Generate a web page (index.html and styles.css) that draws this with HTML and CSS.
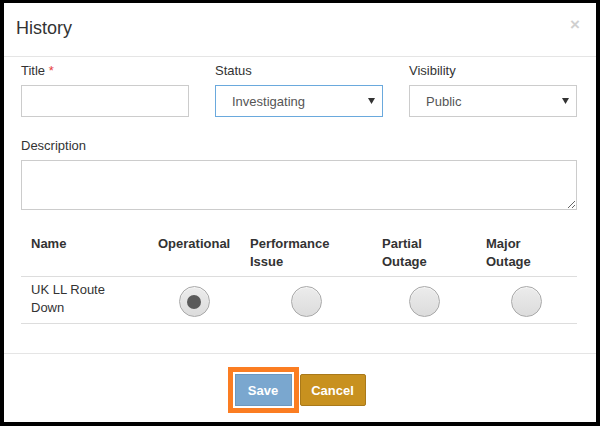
FILE: index.html
```html
<!DOCTYPE html>
<html>
<head>
<meta charset="utf-8">
<link rel="stylesheet" href="styles.css">
</head>
<body>
<div class="modal">
  <div class="modal-header">
    <h4 class="modal-title">History</h4>
    <span class="close">×</span>
  </div>
  <div class="modal-body">
    <div class="row3">
      <div class="field">
        <label class="lbl">Title <span class="req">*</span></label>
        <input class="ctrl" type="text">
      </div>
      <div class="field">
        <label class="lbl">Status</label>
        <div class="ctrl select focus"><span>Investigating</span><svg class="caret" width="7" height="6" viewBox="0 0 7 6"><path d="M0 0H7L3.5 6Z" fill="#333"/></svg></div>
      </div>
      <div class="field">
        <label class="lbl">Visibility</label>
        <div class="ctrl select"><span>Public</span><svg class="caret" width="7" height="6" viewBox="0 0 7 6"><path d="M0 0H7L3.5 6Z" fill="#333"/></svg></div>
      </div>
    </div>
    <div class="field desc">
      <label class="lbl">Description</label>
      <textarea class="ctrl area"></textarea>
    </div>
    <div class="table">
      <div class="th">Name</div>
      <div class="th">Operational</div>
      <div class="th">Performance Issue</div>
      <div class="th">Partial Outage</div>
      <div class="th">Major Outage</div>
      <div class="td name">UK LL Route Down</div>
      <div class="td radio-cell"><span class="radio checked"></span></div>
      <div class="td radio-cell"><span class="radio"></span></div>
      <div class="td radio-cell"><span class="radio"></span></div>
      <div class="td radio-cell"><span class="radio"></span></div>
    </div>
  </div>
  <div class="modal-footer">
    <button class="btn btn-save">Save</button>
    <button class="btn btn-cancel">Cancel</button>
  </div>
</div>
</body>
</html>
```
FILE: styles.css
```css
html, body {
  margin: 0;
  padding: 0;
  background: #000;
  height: 426px;
  overflow: hidden;
}
body {
  font-family: "Liberation Sans", Arial, sans-serif;
  font-size: 13px;
  color: #333;
}
.modal {
  margin: 3px 4px 0 4px;
  height: 419px;
  background: #fff;
  display: flex;
  flex-direction: column;
}
.modal-header {
  display: flex;
  justify-content: space-between;
  align-items: flex-start;
  padding: 15px 16px 18px 12px;
  border-bottom: 1px solid #e5e5e5;
}
.modal-title {
  margin: 0;
  font-size: 18px;
  font-weight: normal;
  line-height: 20px;
  color: #333;
}
.close {
  font-size: 17px;
  font-weight: bold;
  line-height: 14px;
  color: #d0d0d0;
  margin-top: 0;
}
.modal-body {
  padding: 5px 19px 0 17px;
  flex: 1;
  display: flex;
  flex-direction: column;
}
.row3 {
  display: grid;
  grid-template-columns: 168px 168px 168px;
  column-gap: 26px;
}
.field {
  display: flex;
  flex-direction: column;
}
.lbl {
  line-height: 18px;
  margin-bottom: 5px;
  color: #333;
}
.req {
  color: #e63c3c;
}
.ctrl {
  box-sizing: border-box;
  height: 32px;
  border: 1px solid #ccc;
  margin: 0;
  padding: 0 16px;
  font-family: inherit;
  font-size: 13px;
  color: #555;
  background: #fff;
  outline: none;
}
.select {
  display: flex;
  align-items: center;
  justify-content: space-between;
  padding: 0 7px 0 16px;
}
.select.focus {
  border-color: #6aa9dd;
}
.caret {
  display: block;
}
.desc {
  margin-top: 20px;
}
.area {
  height: 50px;
  width: 556px;
  resize: vertical;
  padding: 6px 12px;
}
.table {
  margin-top: 21px;
  display: grid;
  grid-template-columns: 127px 92px 132px 104px 101px;
}
.th {
  font-weight: bold;
  line-height: 18px;
  padding: 4px 10px 5px 10px;
  border-bottom: 1px solid #ddd;
}
.td {
  line-height: 18px;
  padding: 4px 10px 6px 10px;
  border-bottom: 1px solid #ddd;
}
.radio-cell {
  display: flex;
  justify-content: center;
  align-items: flex-start;
}
.radio {
  box-sizing: border-box;
  width: 31px;
  height: 31px;
  margin-top: 5px;
  border-radius: 50%;
  border: 1px solid #a9a9a9;
  background: linear-gradient(#ececec, #dcdcdc);
  box-shadow: inset 0 1px 1px rgba(255,255,255,0.6);
  display: flex;
  align-items: center;
  justify-content: center;
}
.radio.checked::after {
  content: "";
  width: 14px;
  height: 14px;
  border-radius: 50%;
  background: #5a5a5a;
}
.modal-footer {
  border-top: 1px solid #e5e5e5;
  display: flex;
  justify-content: center;
  align-items: flex-start;
  gap: 8px;
  padding: 20px 0 0 0;
  height: 69px;
  box-sizing: border-box;
}
.btn {
  font-family: "Liberation Sans", Arial, sans-serif;
  font-size: 13px;
  font-weight: bold;
  color: #fff;
  height: 32px;
  padding: 0 12px;
  border-radius: 2px;
  cursor: pointer;
}
.btn-save {
  background: #7aa7cf;
  border: 1px solid #6c98c0;
  border-radius: 0;
  outline: 5px solid #fb7d22;
  outline-offset: 2px;
  width: 57px;
}
.btn-cancel {
  background: #c8911f;
  border: 1px solid #a9791a;
  width: 66px;
  padding: 0 8px;
}
```
